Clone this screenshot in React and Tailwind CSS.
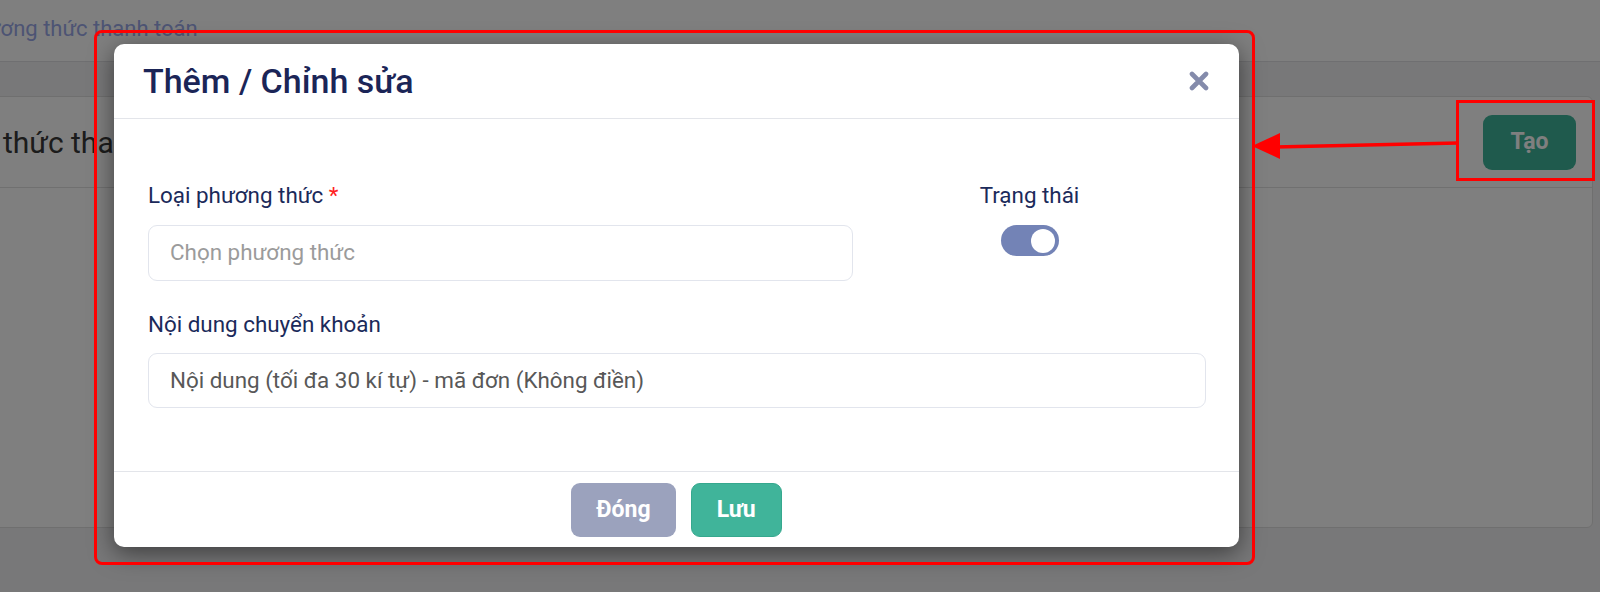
import React from 'react';

function Toggle({ on = true }) {
  return (
    <div
      className={`flex h-[31px] w-[58px] items-center rounded-full px-[4px] ${
        on ? 'justify-end bg-[#7383b6]' : 'justify-start bg-[#d5d8e2]'
      }`}
    >
      <span className="block h-[24px] w-[24px] rounded-full bg-white" />
    </div>
  );
}

function CloseIcon() {
  return (
    <svg width="22" height="20" viewBox="0 0 22 20" className="block">
      <path d="M4 3 L18 17 M18 3 L4 17" stroke="#848bab" strokeWidth="4.6" strokeLinecap="round" />
    </svg>
  );
}

function Annotations() {
  // red markup drawn over the screenshot
  return (
    <>
      <div className="absolute left-[94px] top-[30px] h-[535px] w-[1161px] rounded-[8px] border-[3px] border-[#ff0000]" />
      <div className="absolute left-[1456px] top-[100px] h-[81px] w-[139px] border-[3px] border-[#ff0000]" />
      <svg className="absolute left-0 top-0" width="1600" height="592">
        <line x1="1458" y1="143" x2="1275" y2="147" stroke="#ff0000" strokeWidth="3.5" />
        <polygon points="1252,146 1280,133 1280,159" fill="#ff0000" />
      </svg>
    </>
  );
}

function PaymentModal() {
  return (
    <div className="flex h-[503px] w-[1125px] flex-col rounded-[10px] bg-white shadow-[0_6px_24px_rgba(0,0,0,0.5)]">
      <div className="flex h-[75px] shrink-0 items-center justify-between border-b border-[#e3e5ea] pl-[29px] pr-[29px]">
        <h5 className="text-[34px] font-medium leading-none text-[#1b2557]">Thêm / Chỉnh sửa</h5>
        <button className="p-0">
          <CloseIcon />
        </button>
      </div>

      <div className="flex-1 pl-[34px] pr-[33px] pt-[63px]">
        <div className="flex">
          <div className="w-[705px]">
            <label className="mb-[17px] block h-[26px] text-[22.4px] leading-[26px] text-[#1b2a5a]">
              Loại phương thức <span className="text-[#f22]">*</span>
            </label>
            <div className="flex h-[56px] items-center rounded-[9px] border border-[#e2e5ed] pl-[21px] text-[22.4px] text-[#9b9b9b]">
              Chọn phương thức
            </div>
          </div>
          <div className="flex flex-1 flex-col items-center">
            <label className="mb-[17px] block h-[26px] text-[22.4px] leading-[26px] text-[#1b2a5a]">Trạng thái</label>
            <Toggle on />
          </div>
        </div>

        <label className="mb-[16px] mt-[30px] block h-[26px] text-[22.4px] leading-[26px] text-[#1b2a5a]">
          Nội dung chuyển khoản
        </label>
        <div className="flex h-[55px] items-center rounded-[9px] border border-[#e2e5ed] pl-[21px] text-[22.4px] text-[#585858]">
          Nội dung (tối đa 30 kí tự) - mã đơn (Không điền)
        </div>
      </div>

      <div className="flex h-[76px] shrink-0 items-start justify-center gap-[15px] border-t border-[#e3e5ea] pt-[11px]">
        <button className="h-[54px] rounded-[9px] bg-[#9ba2bd] px-[25px] text-[23px] font-bold text-white">Đóng</button>
        <button className="h-[54px] rounded-[9px] border border-[#36a88e] bg-[#40b49a] px-[25px] text-[23px] font-bold text-white">
          Lưu
        </button>
      </div>
    </div>
  );
}

export default function App() {
  return (
    <div className="relative h-[592px] w-[1600px] overflow-hidden bg-[#f1f1f2] font-['Roboto',sans-serif]">
      <header className="flex h-[62px] items-center border-b border-[#dfdfe2] bg-white">
        <div className="-ml-[39px] pb-[4px] text-[22px] text-[#9aa8e8]">Phương thức thanh toán</div>
      </header>

      <main className="-ml-[130px] pr-[7px] pt-[34px]">
        <div className="h-[432px] rounded-[6px] border border-[#dedede] bg-white">
          <div className="flex h-[91px] items-center justify-between border-b border-[#e0e0e0] pl-[20px] pr-[16px]">
            <h2 className="text-[30px] text-[#383838]">Phương thức thanh toán</h2>
            <button className="h-[55px] w-[93px] rounded-[9px] bg-[#3eb49a] text-[23px] font-bold text-white">Tạo</button>
          </div>
        </div>
      </main>

      <div className="absolute inset-0 bg-black/50 pl-[114px] pt-[44px]">
        <PaymentModal />
      </div>

      <Annotations />
    </div>
  );
}
